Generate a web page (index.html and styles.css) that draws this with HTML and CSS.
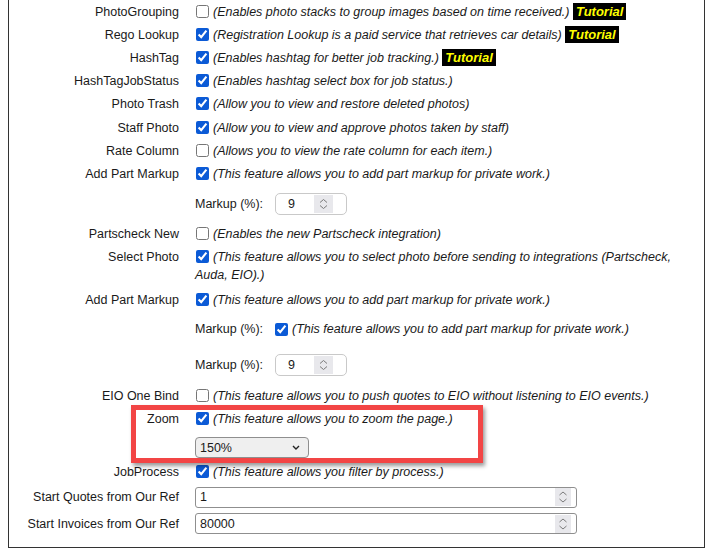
FILE: index.html
```html
<!DOCTYPE html>
<html lang="en">
<head>
    <meta charset="UTF-8">
    <meta name="viewport" content="width=device-width, initial-scale=1.0">
    <title>Company Settings</title>
    <link rel="stylesheet" href="styles.css">
</head>
<body>
    <div class="settings">
        <div class="row">
            <label class="name">PhotoGrouping</label>
            <div class="value"><input type="checkbox"><span class="hint">(Enables photo stacks to group images based on time received.)</span> <a class="tutorial" href="#">Tutorial</a></div>
        </div>
        <div class="row">
            <label class="name">Rego Lookup</label>
            <div class="value"><input type="checkbox" checked><span class="hint">(Registration Lookup is a paid service that retrieves car details)</span> <a class="tutorial" href="#">Tutorial</a></div>
        </div>
        <div class="row">
            <label class="name">HashTag</label>
            <div class="value"><input type="checkbox" checked><span class="hint">(Enables hashtag for better job tracking.)</span> <a class="tutorial" href="#">Tutorial</a></div>
        </div>
        <div class="row">
            <label class="name">HashTagJobStatus</label>
            <div class="value"><input type="checkbox" checked><span class="hint">(Enables hashtag select box for job status.)</span></div>
        </div>
        <div class="row">
            <label class="name">Photo Trash</label>
            <div class="value"><input type="checkbox" checked><span class="hint">(Allow you to view and restore deleted photos)</span></div>
        </div>
        <div class="row">
            <label class="name">Staff Photo</label>
            <div class="value"><input type="checkbox" checked><span class="hint">(Allow you to view and approve photos taken by staff)</span></div>
        </div>
        <div class="row">
            <label class="name">Rate Column</label>
            <div class="value"><input type="checkbox"><span class="hint">(Allows you to view the rate column for each item.)</span></div>
        </div>
        <div class="row">
            <label class="name">Add Part Markup</label>
            <div class="value"><input type="checkbox" checked><span class="hint">(This feature allows you to add part markup for private work.)</span></div>
        </div>
        <div class="row sub">
            <span class="name"></span>
            <div class="value">
                <div class="line">
                    <span class="unit">Markup (%):</span>
                    <span class="number small">
                        <input type="text" value="9">
                        <span class="spin">
                            <svg width="19" height="18" viewBox="0 0 19 18"><path d="M6 7.5 L9.5 4.5 L13 7.5 M6 10.5 L9.5 13.5 L13 10.5" fill="none" stroke="#7a7a7a" stroke-width="1"/></svg>
                        </span>
                    </span>
                </div>
            </div>
        </div>
        <div class="row">
            <label class="name">Partscheck New</label>
            <div class="value"><input type="checkbox"><span class="hint">(Enables the new Partscheck integration)</span></div>
        </div>
        <div class="row wrapped">
            <label class="name">Select Photo</label>
            <div class="value"><input type="checkbox" checked><span class="hint">(This feature allows you to select photo before sending to integrations (Partscheck, Auda, EIO).)</span></div>
        </div>
        <div class="row">
            <label class="name">Add Part Markup</label>
            <div class="value"><input type="checkbox" checked><span class="hint">(This feature allows you to add part markup for private work.)</span></div>
        </div>
        <div class="row sub">
            <span class="name"></span>
            <div class="value">
                <div class="line">
                    <span class="unit">Markup (%):</span>
                    <input type="checkbox" checked><span class="hint">(This feature allows you to add part markup for private work.)</span>
                </div>
                <div class="line">
                    <span class="unit">Markup (%):</span>
                    <span class="number small">
                        <input type="text" value="9">
                        <span class="spin">
                            <svg width="19" height="18" viewBox="0 0 19 18"><path d="M6 7.5 L9.5 4.5 L13 7.5 M6 10.5 L9.5 13.5 L13 10.5" fill="none" stroke="#7a7a7a" stroke-width="1"/></svg>
                        </span>
                    </span>
                </div>
            </div>
        </div>
        <div class="row">
            <label class="name">EIO One Bind</label>
            <div class="value"><input type="checkbox"><span class="hint">(This feature allows you to push quotes to EIO without listening to EIO events.)</span></div>
        </div>
        <div class="row">
            <label class="name">Zoom</label>
            <div class="value"><input type="checkbox" checked><span class="hint">(This feature allows you to zoom the page.)</span></div>
        </div>
        <div class="row select-row">
            <span class="name"></span>
            <div class="value">
                <div class="select">
                    <span>150%</span>
                    <svg width="8" height="5" viewBox="0 0 8 5"><path d="M1 1 L4 4 L7 1" fill="none" stroke="#222" stroke-width="1.4"/></svg>
                </div>
            </div>
        </div>
        <div class="row">
            <label class="name">JobProcess</label>
            <div class="value"><input type="checkbox" checked><span class="hint">(This feature allows you filter by process.)</span></div>
        </div>
        <div class="row field">
            <label class="name">Start Quotes from Our Ref</label>
            <div class="value">
                <span class="number wide">
                    <input type="text" value="1">
                    <span class="spin">
                        <svg width="16" height="18" viewBox="0 0 16 18"><path d="M4.5 7 L8 4 L11.5 7 M4.5 11 L8 14 L11.5 11" fill="none" stroke="#7a7a7a" stroke-width="1"/></svg>
                    </span>
                </span>
            </div>
        </div>
        <div class="row field">
            <label class="name">Start Invoices from Our Ref</label>
            <div class="value">
                <span class="number wide">
                    <input type="text" value="80000">
                    <span class="spin">
                        <svg width="16" height="18" viewBox="0 0 16 18"><path d="M4.5 7 L8 4 L11.5 7 M4.5 11 L8 14 L11.5 11" fill="none" stroke="#7a7a7a" stroke-width="1"/></svg>
                    </span>
                </span>
            </div>
        </div>

        <!-- annotation box drawn over the zoom setting -->
        <div class="highlight"></div>
    </div>
</body>
</html>
```

FILE: styles.css
```css
body {
    font-family: "Liberation Sans", Arial, sans-serif;
    font-size: 12.5px;
    color: #1a1a1a;
    background-color: #fff;
    margin: 0 8px;
}
.settings {
    position: relative;
    border: 1px solid #333;
    border-top: none;
    padding: 0 10px 10px 0;
}
.row {
    display: flex;
    gap: 16px;
    padding: 2.6px 0;
    line-height: 18px;
}
.row.wrapped {
    padding: 2.6px 0 4px;
}
.name {
    flex: none;
    width: 170px;
    text-align: right;
}
.value {
    flex: 1;
    min-width: 0;
}
input[type="checkbox"] {
    width: 13px;
    height: 13px;
    margin: 0 4px 0 1px;
    vertical-align: -2px;
    accent-color: #0b5ad6;
}
.hint {
    font-style: italic;
}
.tutorial {
    display: inline-block;
    background-color: #000;
    color: #ffff00;
    font-size: 13px;
    font-weight: bold;
    font-style: italic;
    line-height: 15px;
    padding: 1px 3px;
    text-decoration: none;
}

/* markup sub rows */
.sub {
    padding: 7px 0 8px;
}
.line {
    display: flex;
    align-items: center;
    min-height: 22px;
}
.line + .line {
    margin-top: 14px;
}
.unit {
    width: 80px;
    flex: none;
}
.line input[type="checkbox"] {
    margin-left: 0;
    vertical-align: middle;
}

/* number inputs with a spinner */
.number {
    display: inline-flex;
    align-items: center;
    box-sizing: border-box;
    background-color: #fff;
}
.number input {
    flex: 1;
    min-width: 0;
    border: none;
    outline: none;
    background: transparent;
    font-family: inherit;
    font-size: 12.5px;
    color: #1a1a1a;
    padding: 0;
}
.spin {
    display: flex;
    align-items: center;
    justify-content: center;
    background-color: #e8e8ec;
}
.number.small {
    width: 72px;
    height: 22px;
    border: 1px solid #c9c9c9;
    border-radius: 5px;
    padding: 0 13px 0 12px;
}
.number.small .spin {
    width: 19px;
    height: 18px;
}
.number.wide {
    width: 382px;
    height: 21px;
    border: 1px solid #8f8f8f;
    border-radius: 3px;
    padding: 0 5px 0 4px;
}
.number.wide .spin {
    width: 16px;
    height: 18px;
}
.field {
    align-items: baseline;
    padding: 3px 0 2.5px;
}

/* zoom dropdown */
.select-row {
    padding: 6.5px 0 2px;
}
.select {
    display: flex;
    align-items: center;
    justify-content: space-between;
    box-sizing: border-box;
    width: 114px;
    height: 21px;
    padding: 0 8px 0 4px;
    background-color: #efefef;
    border: 1px solid #8f8f8f;
    border-radius: 4px;
}

.highlight {
    position: absolute;
    left: 122px;
    top: 405px;
    width: 352px;
    height: 58px;
    box-sizing: border-box;
    border: 5px solid #f24545;
    box-shadow: 2px 3px 4px rgba(0, 0, 0, 0.4);
}
```
